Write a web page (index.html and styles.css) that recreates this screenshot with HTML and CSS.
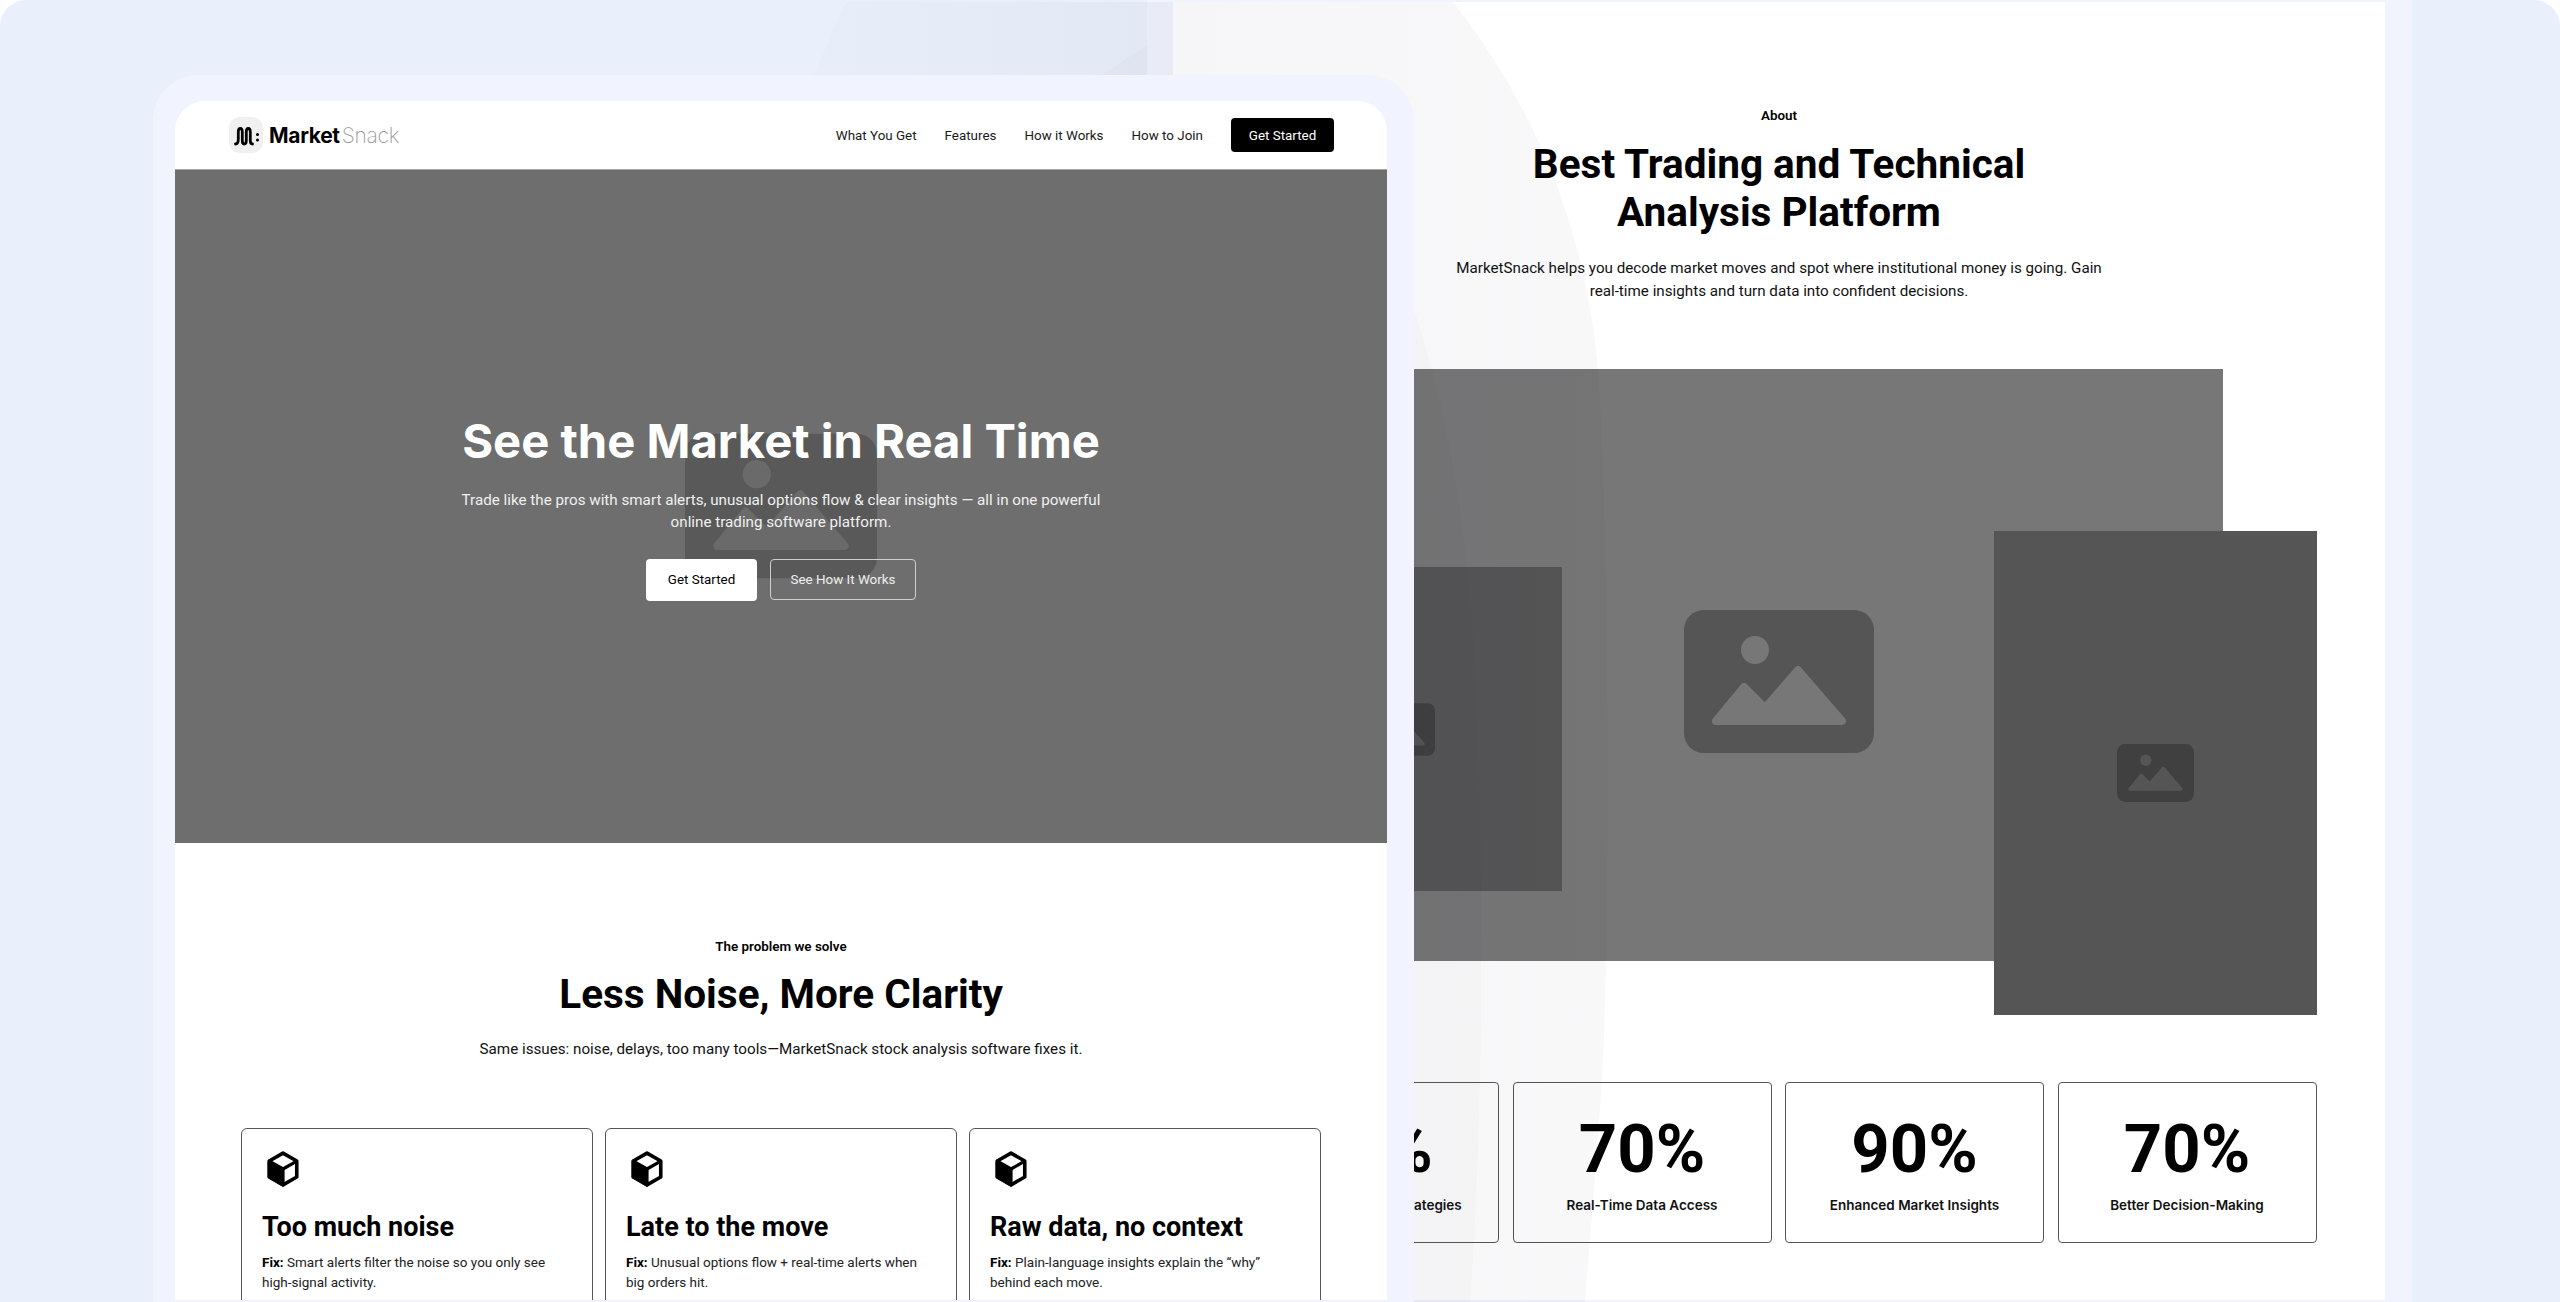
FILE: index.html
```html
<!DOCTYPE html>
<html lang="en">
<head>
<meta charset="utf-8">
<title>MarketSnack</title>
<link rel="stylesheet" href="styles.css">
</head>
<body>
<svg width="0" height="0" class="defs" aria-hidden="true">
  <defs>
    <symbol id="ph" viewBox="0 0 190 143">
      <rect class="ph-box" width="190" height="143" rx="20"/>
      <circle class="ph-hole" cx="71" cy="40" r="14"/>
      <path class="ph-hole ph-round" d="M32 111 L60 77 L81 98 L114 60 L158 111 Z"/>
    </symbol>
    <symbol id="cube" viewBox="0 0 32 34">
      <path d="M16 2 L29 9.5 V24.5 L16 32 L3 24.5 V9.5 Z" fill="#fff" stroke="#000" stroke-width="3.4" stroke-linejoin="round"/>
      <path d="M3 9.5 L16 17 V32 L3 24.5 Z" fill="#000" stroke="#000" stroke-width="3" stroke-linejoin="round"/>
      <path d="M16 17 L29 9.5" stroke="#000" stroke-width="3" fill="none"/>
    </symbol>
    <linearGradient id="glow-fade" gradientUnits="userSpaceOnUse" x1="813" y1="0" x2="1608" y2="0">
      <stop offset="0" stop-color="#1e1e46" stop-opacity=".012"/>
      <stop offset=".45" stop-color="#1e1e46" stop-opacity=".04"/>
      <stop offset="1" stop-color="#1e1e46" stop-opacity=".03"/>
    </linearGradient>
  </defs>
</svg>
<div class="stage">
  <section class="window window-back">
    <div class="inner inner-back">
      <header class="intro intro-back">
        <p class="eyebrow">About</p>
        <h2 class="title title-wide">Best Trading and Technical Analysis Platform</h2>
        <p class="lead lead-back">MarketSnack helps you decode market moves and spot where institutional money is going. Gain real-time insights and turn data into confident decisions.</p>
      </header>
      <div class="collage">
        <div class="shot shot-main"><svg class="ph ph-large"><use href="#ph"/></svg></div>
        <div class="shot shot-left"><svg class="ph ph-tiny"><use href="#ph"/></svg></div>
        <div class="shot shot-right"><svg class="ph ph-small"><use href="#ph"/></svg></div>
      </div>
      <div class="stats">
        <div class="stat"><div class="stat-num">80%</div><div class="stat-label">Improved Trading Strategies</div></div>
        <div class="stat"><div class="stat-num">70%</div><div class="stat-label">Real-Time Data Access</div></div>
        <div class="stat"><div class="stat-num">90%</div><div class="stat-label">Enhanced Market Insights</div></div>
        <div class="stat"><div class="stat-num">70%</div><div class="stat-label">Better Decision-Making</div></div>
      </div>
    </div>
  </section>

  <svg class="glow" viewBox="0 0 2560 1302" aria-hidden="true">
    <path class="glow-a" d="M813 76 L846 2 L1453 2 C1530 100 1592 230 1600 400 C1610 600 1610 900 1603 1060 C1598 1150 1590 1240 1585 1302 L813 1302 Z"/>
    <path class="glow-b" d="M1100 76 L1147 45 V76 Z"/>
    <path class="glow-b" d="M1300 76 C1380 200 1450 350 1470 600 C1485 800 1485 1100 1470 1302 L1300 1302 Z"/>
  </svg>

  <section class="window window-front">
    <div class="inner inner-front">
      <nav class="nav">
        <a class="brand" href="#">
          <span class="brand-mark">
            <svg viewBox="0 0 34 36" width="34" height="36"><path d="M6.5 27c2.300 0 2.800-2 2.800-5v-7c0-2.200.8-3.500 2-3.500s2 1.300 2 3.500v8.500c0 2 .8 3.500 2 3.500s2-1.500 2-3.500V15c0-2.200.8-3.500 2-3.500s2 1.300 2 3.500v8.500c0 2 .9 3.500 2.200 3.500" fill="none" stroke="#000" stroke-width="2.800" stroke-linecap="round"/><circle cx="28.500" cy="17.500" r="1.500"/><circle cx="28.500" cy="23" r="1.500"/></svg>
          </span>
          <span class="brand-name"><b>Market</b><span class="brand-light">Snack</span></span>
        </a>
        <div class="nav-links">
          <a href="#">What You Get</a>
          <a href="#">Features</a>
          <a href="#">How it Works</a>
          <a href="#">How to Join</a>
          <a class="btn btn-dark" href="#">Get Started</a>
        </div>
      </nav>
      <div class="hero">
        <svg class="ph ph-hero"><use href="#ph"/></svg>
        <h1 class="hero-title">See the Market in Real Time</h1>
        <p class="hero-lead">Trade like the pros with smart alerts, unusual options flow &amp; clear insights — all in one powerful online trading software platform.</p>
        <div class="hero-actions">
          <a class="btn btn-white" href="#">Get Started</a>
          <a class="btn btn-ghost" href="#">See How It Works</a>
        </div>
      </div>
      <div class="problem">
        <header class="intro">
          <p class="eyebrow">The problem we solve</p>
          <h2 class="title">Less Noise, More Clarity</h2>
          <p class="lead">Same issues: noise, delays, too many tools—MarketSnack stock analysis software fixes it.</p>
        </header>
        <div class="cards">
          <article class="card">
            <svg class="cube"><use href="#cube"/></svg>
            <h3>Too much noise</h3>
            <p><b>Fix:</b> Smart alerts filter the noise so you only see high-signal activity.</p>
          </article>
          <article class="card">
            <svg class="cube"><use href="#cube"/></svg>
            <h3>Late to the move</h3>
            <p><b>Fix:</b> Unusual options flow + real-time alerts when big orders hit.</p>
          </article>
          <article class="card">
            <svg class="cube"><use href="#cube"/></svg>
            <h3>Raw data, no context</h3>
            <p><b>Fix:</b> Plain-language insights explain the “why” behind each move.</p>
          </article>
        </div>
      </div>
    </div>
  </section>
</div>
</body>
</html>
```

FILE: styles.css
```css
* { box-sizing: border-box; }
html, body { margin: 0; padding: 0; background: #fff; }
body { font-family: "Roboto", "Liberation Sans", sans-serif; color: #000; }
a { color: inherit; text-decoration: none; }
h1, h2, h3, p { margin: 0; }
.defs { position: absolute; }

.stage {
  position: relative;
  width: 2560px;
  height: 1302px;
  overflow: hidden;
  background: #eaf0fb;
  border-radius: 26px 26px 0 0;
}

.window {
  position: absolute;
  background: #f1f4fe;
}
.window-back { left: 1147px; top: -24px; width: 1265px; height: 1350px; padding: 26px 27px 26px 26px; }
.window-front { left: 153px; top: 75px; width: 1261px; height: 1251px; padding: 26px 27px 26px 22px; border-radius: 46px 46px 0 0; }
.inner { height: 100%; overflow: hidden; background: #fff; }
.inner-front { border-radius: 30px 30px 0 0; }

.glow { position: absolute; left: 0; top: 0; width: 2560px; height: 1302px; }
.glow-a { fill: url(#glow-fade); }
.glow-b { fill: rgba(30, 30, 50, .02); }

/* Nav */
.nav {
  display: flex;
  align-items: center;
  justify-content: space-between;
  height: 69px;
  padding: 0 53px 0 54px;
  border-bottom: 1px solid #a5a5a5;
}
.brand { display: flex; align-items: center; gap: 6px; }
.brand-mark { display: block; width: 34px; height: 36px; background: #f0f0f0; border-radius: 11px; }
.brand-mark svg { display: block; }
.brand-name { font-family: "Inter", sans-serif; font-size: 21px; letter-spacing: -.3px; line-height: 1; }
.brand-name b { font-weight: 700; }
.brand-light { font-weight: 200; color: #9a9a9a; margin-left: 2px; }
.nav-links { display: flex; align-items: center; gap: 28px; font-size: 13.400px; color: #1a1a1a; }

.btn {
  display: flex;
  align-items: center;
  justify-content: center;
  font-size: 13.400px;
  border-radius: 4px;
}
.btn-dark { width: 103px; height: 34px; background: #000; color: #fff; }
.btn-white { width: 111px; height: 42px; background: #fff; color: #000; }
.btn-ghost { width: 146px; height: 41px; border: 1px solid #cfcfcf; color: #eee; }

/* Hero */
.hero {
  position: relative;
  display: flex;
  flex-direction: column;
  align-items: center;
  justify-content: center;
  height: 673px;
  background: #6e6e6e;
  color: #fff;
  text-align: center;
}
.ph { display: block; --box: #555; --hole: #777; }
.ph-box { fill: var(--box); }
.ph-hole { fill: var(--hole); }
.ph-round { stroke: var(--hole); stroke-width: 8; stroke-linejoin: round; }
.ph-hero {
  position: absolute;
  left: 510px;
  top: 260px;
  width: 192px;
  height: 152px;
  --box: #595959;
  --hole: #6a6a6a;
}
.hero-title { position: relative; font-family: "Inter", sans-serif; font-size: 47.200px; font-weight: 700; line-height: 56px; }
.hero-lead { position: relative; width: 660px; margin-top: 20px; font-size: 15.200px; line-height: 22.500px; color: #f0f0f0; }
.hero-actions { position: relative; display: flex; align-items: center; gap: 13px; margin-top: 25px; }

/* Shared intro */
.intro { text-align: center; }
.eyebrow { font-size: 13.400px; font-weight: 600; line-height: 20px; }
.title { font-size: 40.500px; font-weight: 700; line-height: 48px; }
.lead { font-size: 15.200px; line-height: 23px; color: #111; }

/* Problem section */
.problem { padding: 94px 66px 0; }
.problem .title { margin-top: 13px; }
.problem .lead { margin-top: 20px; }
.cards { display: grid; grid-template-columns: repeat(3, 352px); gap: 12px; margin-top: 67px; }
.card { height: 220px; padding: 22px 20px; border: 1px solid #555; border-radius: 6px; }
.cube { display: block; width: 34px; height: 36px; margin-left: 4px; }
.card h3 { margin-top: 23px; font-size: 27px; font-weight: 700; line-height: 34px; }
.card p { margin-top: 8px; font-size: 13.500px; line-height: 20px; color: #222; }
.card b { font-weight: 700; color: #000; }

/* Back window */
.inner-back { padding: 0 67px; }
.intro-back { padding-top: 104px; }
.title-wide { width: 560px; margin: 14px auto 0; }
.lead-back { width: 650px; margin: 21px auto 0; }
.collage { position: relative; height: 646px; margin-top: 66px; }
.shot { position: absolute; display: flex; align-items: center; justify-content: center; }
.shot-main { left: 95px; top: 0; width: 888px; height: 592px; padding-top: 32px; background: #777; }
.shot-left { left: -2px; top: 198px; width: 324px; height: 324px; background: #555; }
.shot-right { left: 754px; top: 162px; width: 323px; height: 484px; background: #555; }
.ph-large { width: 190px; height: 143px; }
.ph-small { width: 77px; height: 62px; --box: #404040; --hole: #555; }
.ph-tiny { width: 70px; height: 53px; --box: #404040; --hole: #555; }
.stats { display: grid; grid-template-columns: repeat(4, 259px); gap: 14px 13.500px; margin-top: 67px; }
.stat {
  display: flex;
  flex-direction: column;
  align-items: center;
  height: 161px;
  padding-top: 26px;
  border: 1px solid #555;
  border-radius: 4px;
}
.stat-num { font-size: 67px; font-weight: 700; line-height: 80px; }
.stat-label { margin-top: 6px; font-family: "Inter", sans-serif; font-size: 13.500px; font-weight: 600; line-height: 20px; color: #111; }
```
